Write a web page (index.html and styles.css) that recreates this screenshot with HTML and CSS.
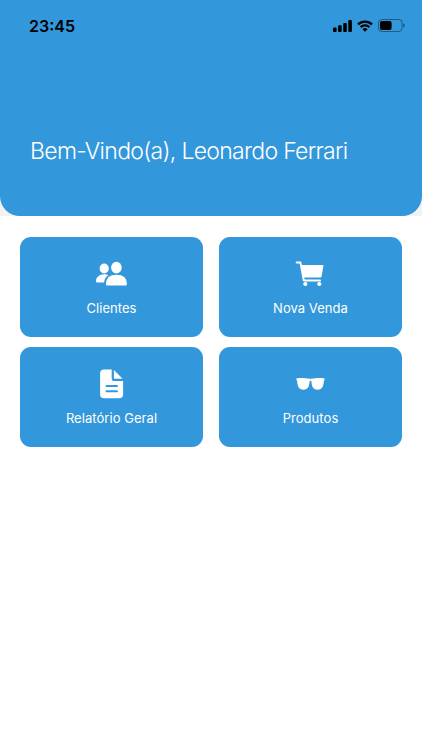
FILE: index.html
```html
<!DOCTYPE html>
<html lang="pt-BR">
  <head>
    <meta charset="UTF-8" />
    <meta name="viewport" content="width=device-width, initial-scale=1.0" />
    <title>Início</title>
    <link rel="stylesheet" href="styles.css">
  </head>
  <body>
    <div class="header-wrapper">
      <header>
        <div class="status-bar">
          <span class="time">23:45</span>
          <div class="status-icons">
            <svg class="signal" width="19" height="12" viewBox="0 0 19 12">
              <rect x="0" y="7.5" width="3.6" height="4.5" rx="1" />
              <rect x="5.1" y="5.3" width="3.6" height="6.7" rx="1" />
              <rect x="10.2" y="3" width="3.6" height="9" rx="1" />
              <rect x="15.3" y="0" width="3.6" height="12" rx="1" />
            </svg>
            <svg class="wifi" width="16" height="12" viewBox="0 0 16 12">
              <path d="M1 4.4a10 10 0 0 1 14 0M3.6 7.1a6.4 6.4 0 0 1 8.8 0" />
              <path class="dot" d="M8 11.8 5.4 9.2a3.8 3.8 0 0 1 5.2 0Z" />
            </svg>
            <svg class="battery" width="27" height="13" viewBox="0 0 27 13">
              <rect class="outline" x=".5" y=".5" width="23.6" height="12" rx="3.4" />
              <rect x="2" y="2" width="11.6" height="9" rx="2" />
              <path class="tip" d="M25.3 4.4c1.8.7 1.8 3.5 0 4.2Z" />
            </svg>
          </div>
        </div>
        <h1>Bem-Vindo(a), Leonardo Ferrari</h1>
      </header>
    </div>
    <main class="menu">
      <a class="card">
        <svg width="32" height="32" viewBox="0.5 0 32 32">
          <ellipse cx="8.7" cy="10.5" rx="4.6" ry="4.9" />
          <path d="M.5 23.2C.5 19.1 4.2 16.3 8.7 16.3c1.7 0 3.1.4 4.1.9-2.3 1.5-3.9 3.6-4.2 7.3H1.5q-1 0-1-1.3Z" />
          <ellipse cx="20.9" cy="9.6" rx="5.3" ry="5.8" />
          <path d="M10.4 26q0-9.3 10.5-9.3T31.4 26q0 1.5-1.5 1.5h-18q-1.5 0-1.5-1.5Z" />
        </svg>
        <span>Clientes</span>
      </a>
      <a class="card">
        <svg width="32" height="32" viewBox="1 0 32 32">
          <path class="line" d="M2.6 4.4h3.8l3.4 18h16.2" />
          <path d="M7.2 6.9h21.3q1.1 0 .9 1.1l-1.8 10.2q-.2 1.2-1.4 1.2H9.6Z" />
          <circle cx="11.3" cy="26" r="2.1" />
          <circle cx="25.3" cy="26" r="2.1" />
        </svg>
        <span>Nova Venda</span>
      </a>
      <a class="card">
        <svg width="32" height="32" viewBox="0.5 0 32 32">
          <path d="M16.2 1.4v9.4q0 2.2 2.2 2.2h9.2v13.2q0 4-4 4H8.6q-4 0-4-4V5.4q0-4 4-4Z" />
          <path d="M18.4 2v7.9q0 .9.9.9h7.8Z" />
          <path class="cut" d="M11 18h10.5M11 23.2h10.5" />
        </svg>
        <span>Relatório Geral</span>
      </a>
      <a class="card">
        <svg width="32" height="32" viewBox="0.5 0 32 32">
          <path d="M1.9 10.4C6 9.6 11 9.8 14.1 10.6q1.9.4 3.8 0C21 9.8 26 9.6 30.1 10.4V12q-.7.3-.8 1.5C29 19 27 21.7 23.2 21.7 19 21.7 17.3 19 17 14q-.1-1.5-1-1.5T15 14C14.7 19 13 21.7 8.8 21.7 5 21.7 3 19 2.7 13.5q-.1-1.2-.8-1.5Z" />
        </svg>
        <span>Produtos</span>
      </a>
    </main>
  </body>
</html>
```
FILE: styles.css
```css
* {
  box-sizing: border-box;
}
body {
  margin: 0;
  min-height: 100vh;
  background-color: #fff;
  font-family: Inter, "Liberation Sans", sans-serif;
}
.header-wrapper {
  background-color: #f2f2f2;
}
header {
  height: 216px;
  padding: 0 17px 0 29px;
  background-color: #3397dc;
  border-radius: 0 0 20px 20px;
}
.status-bar {
  display: flex;
  justify-content: space-between;
  align-items: center;
  height: 51px;
}
.time {
  font-size: 16px;
  font-weight: 600;
}
.status-icons {
  display: flex;
  align-items: center;
  gap: 5px;
}
.wifi {
  fill: none;
  stroke: #000;
  stroke-width: 2.2;
}
.wifi .dot {
  fill: #000;
  stroke: none;
}
.battery .outline {
  fill: none;
  stroke: #000;
  stroke-opacity: 0.4;
}
.battery .tip {
  fill-opacity: 0.5;
}
h1 {
  margin: 85px 0 0 1px;
  color: #fff;
  font-size: 23px;
  font-weight: 300;
  line-height: 30px;
  letter-spacing: -0.69px;
  white-space: nowrap;
}
.menu {
  display: grid;
  grid-template-columns: 1fr 1fr;
  gap: 10px 16px;
  padding: 21px 20px;
}
.card {
  display: flex;
  flex-direction: column;
  align-items: center;
  height: 100px;
  padding-top: 21px;
  color: #fff;
  font-size: 13px;
  line-height: 20px;
  letter-spacing: 0.05px;
  background-color: #3397dc;
  border-radius: 11px;
}
.card svg {
  fill: #fff;
  margin-bottom: 8px;
}
.card .line {
  fill: none;
  stroke: #fff;
  stroke-width: 2;
  stroke-linecap: round;
  stroke-linejoin: round;
}
.card .cut {
  fill: none;
  stroke: #3397dc;
  stroke-width: 2;
  stroke-linecap: round;
}
```
